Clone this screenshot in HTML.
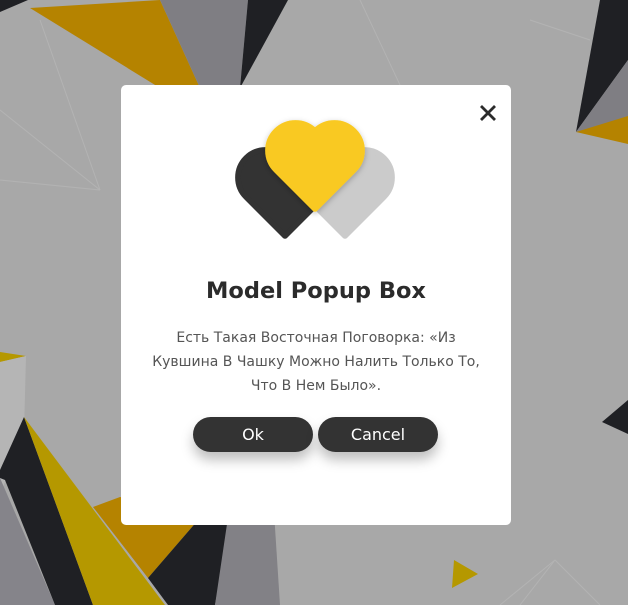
<!DOCTYPE html>
<html><head><meta charset="utf-8"><style>
html,body{margin:0;padding:0;width:628px;height:605px;overflow:hidden;background:#a8a8a8;}
#bg{position:absolute;left:0;top:0;}
.modal{position:absolute;left:121px;top:85px;width:390px;height:440px;background:#fff;border-radius:5px;}
.close{position:absolute;left:479px;top:104px;}
h1{position:absolute;left:121px;width:390px;top:278px;margin:0;text-align:center;font:bold 22.5px "DejaVu Sans","Liberation Sans",sans-serif;color:#2b2b2b;}
p{position:absolute;left:121px;width:390px;top:326px;margin:0;text-align:center;font:14px/24px "DejaVu Sans","Liberation Sans",sans-serif;color:#555;}
.btn{position:absolute;top:417px;width:120px;height:35px;border-radius:18px;background:#333;color:#fff;font:16px/35px "DejaVu Sans","Liberation Sans",sans-serif;text-align:center;box-shadow:0 8px 12px rgba(0,0,0,0.25);}
</style></head><body>
<svg id="bg" width="628" height="605" viewBox="0 0 628 605">
<polygon points="0,0 28,0 0,12" fill="#1f2024"/>
<polygon points="30,8 160,0 200,88 160,88" fill="#b58300"/>
<polygon points="160,0 248,0 240,88 200,88" fill="#7f7e83"/>
<polygon points="248,0 288,0 240,88" fill="#1f2024"/>
<polygon points="600,0 628,0 628,60 576,132" fill="#1f2024"/>
<polygon points="576,132 628,60 628,120" fill="#7f7e83"/>
<polygon points="576,132 628,116 628,144" fill="#b58300"/>
<polygon points="602,422 628,400 628,434" fill="#1f2024"/>
<polygon points="0,352 26,356 0,362" fill="#b59800"/>
<polygon points="0,362 26,356 24,432 0,495" fill="#b5b5b5"/>
<polygon points="0,478 55,605 0,605" fill="#85848a"/>
<polygon points="24,417 93,605 55,605 5,480 0,478 0,470" fill="#1f2024"/>
<polygon points="24,417 165,605 93,605" fill="#b59800"/>
<polygon points="93,507 120,497 205,512 148,578" fill="#b58300"/>
<polygon points="148,578 205,512 240,470 215,605 168,605" fill="#1f2024"/>
<polygon points="235,470 270,450 280,605 215,605" fill="#828186"/>
<polygon points="454,560 478,574 452,588" fill="#b59800"/>
<g stroke="#b8b8b8" stroke-width="1" fill="none" opacity="0.7">
<line x1="40" y1="20" x2="100" y2="190"/><line x1="0" y1="180" x2="100" y2="190"/><line x1="0" y1="110" x2="100" y2="190"/>
<line x1="555" y1="560" x2="500" y2="605"/><line x1="555" y1="560" x2="520" y2="605"/><line x1="555" y1="560" x2="600" y2="605"/>
<line x1="530" y1="20" x2="590" y2="40"/><line x1="360" y1="0" x2="400" y2="85"/>
</g>
</svg>
<div class="modal"></div>
<svg class="close" width="18" height="18" viewBox="0 0 18 18"><path d="M2 2L16 16M16 2L2 16" stroke="#2b2b2b" stroke-width="2.8"/></svg>
<svg style="position:absolute;left:0;top:0" width="628" height="605">
<defs><filter id="sh" x="-30%" y="-30%" width="160%" height="160%"><feDropShadow dx="0" dy="2" stdDeviation="3" flood-color="#000" flood-opacity="0.25"/></filter></defs>
<g stroke-linejoin="round" stroke-width="6">
<path d="M285,238 L244,197 A20.7,20.7 0 0 1 285,156 A20.7,20.7 0 0 1 326,197 Z" fill="#333" stroke="#333" transform="translate(285,197) scale(0.95) translate(-285,-197)"/>
<path d="M345,238 L304,197 A20.7,20.7 0 0 1 345,156 A20.7,20.7 0 0 1 386,197 Z" fill="#cbcbcb" stroke="#cbcbcb" transform="translate(345,197) scale(0.95) translate(-345,-197)"/>
<path d="M315,211 L274,170 A20.7,20.7 0 0 1 315,129 A20.7,20.7 0 0 1 356,170 Z" fill="#f9c923" stroke="#f9c923" filter="url(#sh)" transform="translate(315,170) scale(0.95) translate(-315,-170)"/>
</g>
</svg>
<h1>Model Popup Box</h1>
<p>Есть Такая Восточная Поговорка: «Из<br>Кувшина В Чашку Можно Налить Только То,<br>Что В Нем Было».</p>
<div class="btn" style="left:193px">Ok</div>
<div class="btn" style="left:318px">Cancel</div>
</body></html>
